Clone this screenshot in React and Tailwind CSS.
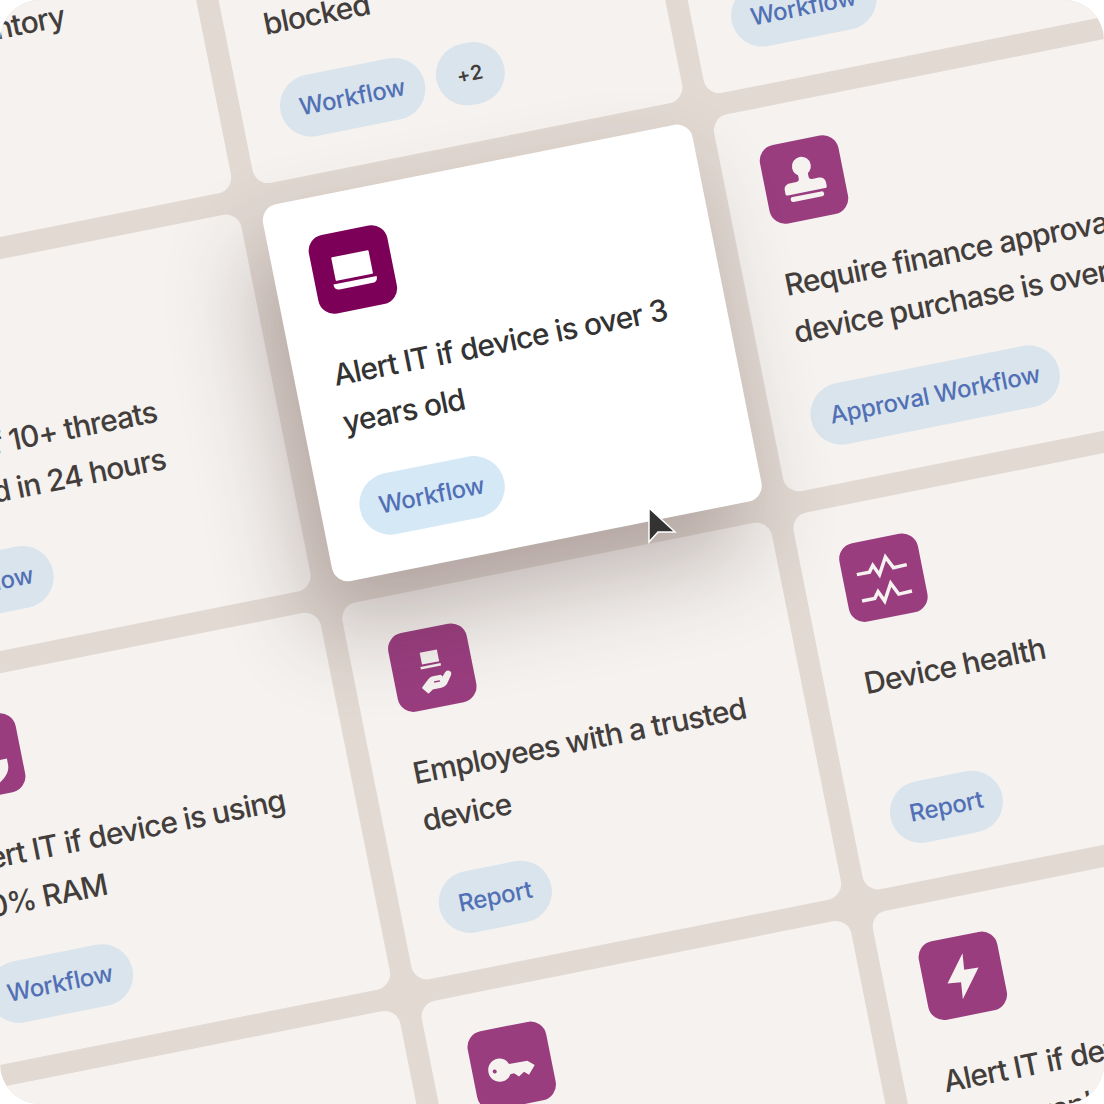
const CARDS = [
    { title: 'Hardware inventory', tags: ['Workflow'] },
    { title: 'Alert IT if a device login is blocked', tags: ['Workflow', '+2'] },
    { title: 'Alert IT if disk is encrypted', tags: ['Workflow'] },
    { title: 'Alert IT if 10+ threats detected in 24 hours', icon: 'shield', tags: ['Workflow'] },
    { title: 'Alert IT if device is over 3 years old', icon: 'laptop', tags: ['Workflow'], active: true },
    { title: 'Require finance approval if device purchase is over', icon: 'stamp', tags: ['Approval Workflow'] },
    { title: 'Alert IT if device is using 80% RAM', icon: 'shield', tags: ['Workflow'] },
    { title: 'Employees with a trusted device', icon: 'hand', tags: ['Report'] },
    { title: 'Device health', icon: 'pulse', tags: ['Report'] },
    { title: 'Device list', tags: ['Report'] },
    { title: 'Rotate admin keys', icon: 'key', tags: ['Workflow'] },
    { title: 'Alert IT if device security apps aren\'t on', icon: 'bolt', tags: ['Workflow'] },
];

function Glyph({ name }) {
    if (name === 'laptop') {
        return (
            <svg viewBox="0 0 80 80" className="w-20 h-20" fill="white">
                <rect x="21" y="24" width="38" height="24" rx="1" />
                <path d="M18 51 H62 V52 C62 55 60 57 57 57 H23 C20 57 18 55 18 52 Z" />
            </svg>
        );
    }
    if (name === 'stamp') {
        return (
            <svg viewBox="0 0 80 80" className="w-20 h-20" fill="#f5f2ef">
                <circle cx="40" cy="26.5" r="9.5" />
                <path d="M35 30 H45 V38 C45 40 46 41 48 41 H55 C58.500 41 61 43.500 61 47 V51 C61 52 60 52.500 59 52.500 H21 C20 52.500 19 52 19 51 V47 C19 43.500 21.500 41 25 41 H32 C34 41 35 40 35 38 Z" />
                <rect x="23" y="55" width="34" height="5" rx="2.500" />
            </svg>
        );
    }
    if (name === 'pulse') {
        return (
            <svg viewBox="0 0 80 80" className="w-20 h-20" fill="none" stroke="#f5f2ef" strokeWidth="3.500">
                <path d="M14.500 31.800 H27.400 L32 25.800 L36.700 36.300 L46 20 L51.800 32.200 L65.400 31.800" />
                <path d="M14.500 58.700 H27.400 L32 52.700 L36.700 63.200 L46 46.900 L51.800 59.100 L65.400 58.700" />
            </svg>
        );
    }
    if (name === 'hand') {
        return (
            <svg viewBox="0 0 80 80" className="w-20 h-20">
                <rect x="30.500" y="23" width="17.500" height="12" fill="#f5f2ef" />
                <rect x="28.500" y="37" width="20.500" height="2.500" fill="#f5f2ef" />
                <path d="M27 58 L33 52.500 C35 50.500 37.500 49.500 40 49.500 H45.500 C48 49.500 48 54 45.500 54 H41 L37 56 H45 L52 48 C54.500 45.500 57.500 47.500 56 50.500 L51 57.500 C49.500 59.500 47.500 60.500 45 60.500 H36 L31.500 63.500 Z" fill="#f5f2ef" stroke="#f5f2ef" strokeWidth="2" strokeLinejoin="round" strokeLinecap="round" />
                <path d="M39 54.500 H45" stroke="#993d7f" strokeWidth="1.500" fill="none" />
            </svg>
        );
    }
    if (name === 'bolt') {
        return (
            <svg viewBox="0 0 80 80" className="w-20 h-20" fill="#f5f2ef">
                <polygon points="44.100,17.700 23.500,44.500 37,46 35.400,62.900 57,34.900 42.500,34.400" />
            </svg>
        );
    }
    if (name === 'key') {
        return (
            <svg viewBox="0 0 80 80" className="w-20 h-20" fill="#f5f2ef">
                <path fillRule="evenodd" d="M27.400 30.400 C33 30.400 36 33.500 37.700 37.800 L56.300 38.200 L62.700 43.800 L55.200 52.200 L50.900 48.300 L45.100 51.900 L40.900 47.700 L37 48 C35 51.500 32 53.400 27.400 53.400 C21 53.400 15.900 48.300 15.900 41.900 C15.900 35.500 21 30.400 27.400 30.400 Z M22.200 40.200 A2 2 0 1 0 22.200 44.200 A2 2 0 1 0 22.200 40.200 Z" />
            </svg>
        );
    }
    if (name === 'shield') {
        return (
            <svg viewBox="0 0 80 80" className="w-20 h-20" fill="#f5f2ef">
                <path d="M15 46 H65 V52 C65 60 58 66 50 70 L40 74 L30 70 C22 66 15 60 15 52 Z" />
            </svg>
        );
    }
    return null;
}

function Card({ title, icon, tags, active }) {
    return (
        <div className={`h-[384px] rounded-2xl pt-[39px] pl-[38.5px] pr-[30px] pb-[37px] flex flex-col relative ${active ? 'bg-white z-10 shadow-[-22px_48px_90px_rgba(70,45,45,0.3)]' : 'bg-[#f5f2ef]'}`}>
            <div className={`w-20 h-20 shrink-0 rounded-2xl ${active ? 'bg-[#7d0058]' : 'bg-[#993d7f]'}`}>
                <Glyph name={icon} />
            </div>
            <p className={`mt-[36px] ml-px text-[30px] tracking-[-0.9px] leading-[48px] font-medium ${active ? 'text-[#333333]' : 'text-[#433e3c]'}`}>{title}</p>
            <div className="mt-auto flex gap-3">
                {tags.map(t => (
                    <span
                        key={t}
                        className={`h-[62px] flex items-center rounded-full whitespace-nowrap ${t === '+2' ? 'px-[21px] text-[20px] font-semibold tracking-wider bg-[#d9e4ec] text-[#433e3c]' : `px-5 text-[24px] tracking-[-0.3px] font-medium text-[#5270b5] ${active ? 'bg-[#d5e8f6]' : 'bg-[#d9e4ec]'}`}`}
                    >{t}</span>
                ))}
            </div>
        </div>
    );
}

export default function App() {
    return (
        <div className="w-[1104px] h-[1104px] rounded-[40px] overflow-hidden bg-[#e2d9d3] relative flex items-center justify-center font-['Inter',sans-serif]">
            <div className="grid grid-cols-[438px_438px_438px] gap-[22px] shrink-0 rotate-[-11.28deg]">
                {CARDS.map(c => <Card key={c.title} {...c} />)}
            </div>
            {/* cursor */}
            <svg viewBox="0 0 40 50" className="absolute left-[640px] top-[500px] w-10 h-[50px] z-20">
                <polygon points="9,8 35,32 18,32 9,42" fill="#333333" stroke="white" strokeWidth="1.500" />
            </svg>
        </div>
    );
}
